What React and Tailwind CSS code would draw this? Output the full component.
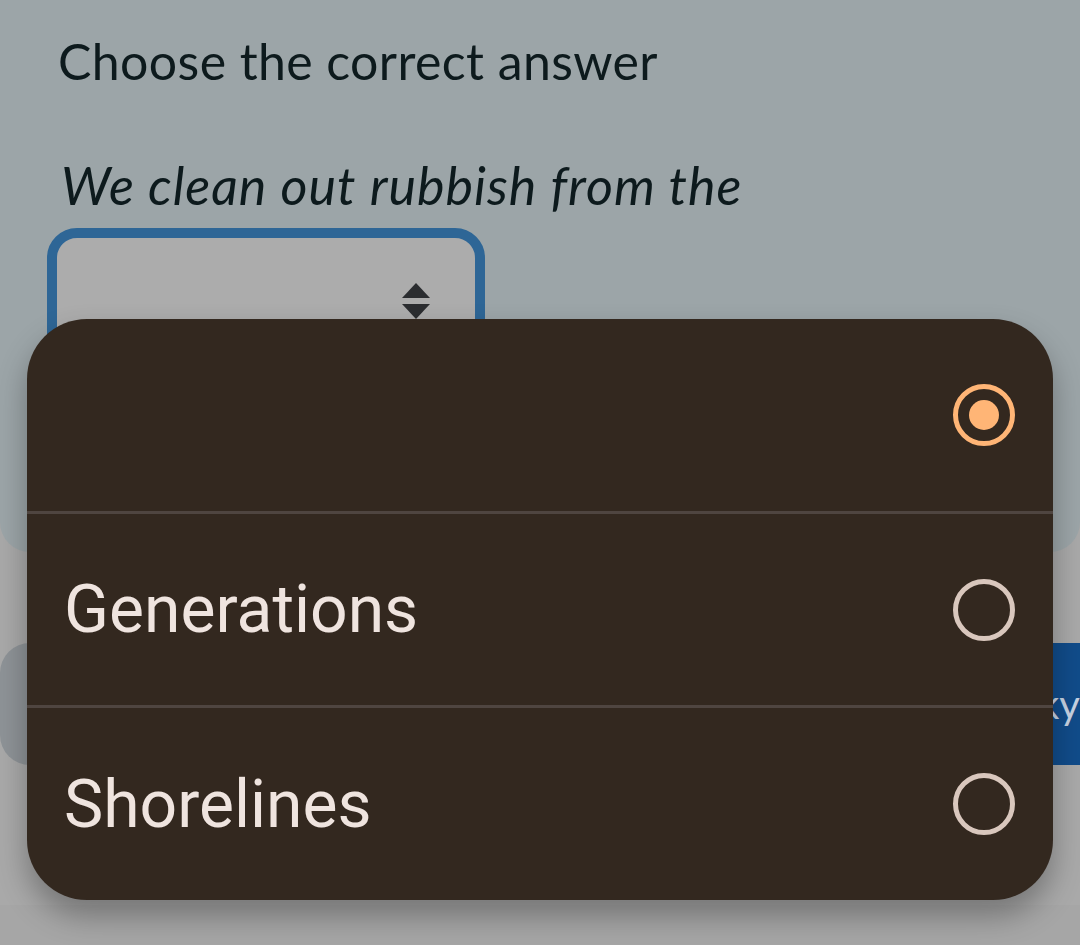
import React from 'react'

const options = [
    {label: '', selected: true},
    {label: 'Generations', selected: false},
    {label: 'Shorelines', selected: false},
]

function Radio({selected}) {
    if (selected) {
        return (<div className="w-[62px] h-[62px] rounded-full border-[5px] border-[#ffb576] flex items-center justify-center">
            <div className="w-[30px] h-[30px] rounded-full bg-[#ffb576]"/>
        </div>)
    }
    return <div className="w-[62px] h-[62px] rounded-full border-[5px] border-[#d9c7bd]"/>
}

export default function App() {
    return (<div className="relative w-[1080px] h-[945px] overflow-hidden bg-[#a9a9a9]" style={{fontFamily: 'Lato, "Open Sans", sans-serif'}}>
        <div className="h-[552px] bg-[#9ca5a8] rounded-b-[30px] pl-[58px] pt-[30px]">
            <h1 className="text-[50px] leading-[62px] tracking-[0.4px] text-[#0d1a1d]">Choose the correct answer</h1>
            <p className="mt-[62px] text-[52px] leading-[62px] tracking-[1px] italic text-[#0d1a1d] pl-[3px]">We clean out rubbish from the</p>
            <div className="mt-[12px] -ml-[11px] w-[438px] h-[200px] rounded-[30px] border-[10px] border-[#2e6696] bg-[#acacac] relative">
                <svg className="absolute left-[343px] top-[45px]" width="32" height="36" viewBox="0 0 32 36">
                    <path d="M16 0 L30 15 L2 15 Z" fill="#2b2d30"/>
                    <path d="M2 21 L30 21 L16 36 Z" fill="#2b2d30"/>
                </svg>
            </div>
        </div>

        <div className="mt-[91px] flex justify-between h-[122px]">
            <div className="w-[500px] h-full bg-[#8e9397] rounded-[30px]"/>
            <div className="w-[400px] h-full bg-[#114c8a] flex items-center justify-end text-[40px] text-[#c7d3e3]">
                ky
            </div>
        </div>
        <div className="mt-[140px] h-[40px] bg-[#a6a6a6]"/>

        <div className="absolute left-[27px] top-[319px] w-[1026px] h-[581px] rounded-[60px] bg-[#33281f] shadow-[0_16px_30px_rgba(0,0,0,0.3)] flex flex-col overflow-hidden" style={{fontFamily: 'Roboto, sans-serif'}}>
            {options.map((o, i) => (
                <div key={i} className={'flex-1 flex items-center justify-between pl-[37px] pr-[38px] ' + (i > 0 ? 'border-t-[3px] border-[#4f4540]' : '')}>
                    <span className="text-[66px] text-[#efe4df]">{o.label}</span>
                    <Radio selected={o.selected}/>
                </div>
            ))}
        </div>
    </div>)
}
